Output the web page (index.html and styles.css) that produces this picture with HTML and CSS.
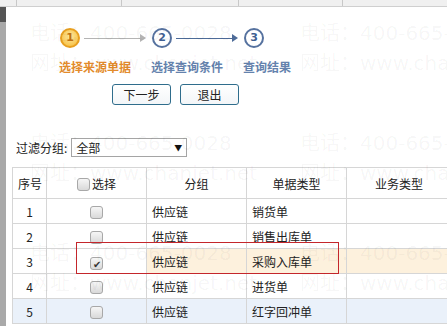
FILE: index.html
```html
<!DOCTYPE html>
<html>

<head>
    <meta charset="UTF-8">
    <title>查询</title>
    <link rel="stylesheet" href="styles.css">
</head>

<body>
    <div class="topbar">
        <div class="tab tab-a"></div>
        <div class="tab tab-b"></div>
        <div class="tab tab-c"></div>
        <div class="tab tab-d"></div>
    </div>
    <div class="page">
        <div class="side"></div>
        <div class="main">
            <!-- 步骤 -->
            <div class="steps">
                <div class="step">
                    <div class="step-top">
                        <span class="circle circle-on">1</span>
                        <span class="arrow arrow-gray"></span>
                    </div>
                    <div class="step-name name-on">选择来源单据</div>
                </div>
                <div class="step">
                    <div class="step-top">
                        <span class="circle">2</span>
                        <span class="arrow"></span>
                    </div>
                    <div class="step-name">选择查询条件</div>
                </div>
                <div class="step">
                    <div class="step-top">
                        <span class="circle">3</span>
                    </div>
                    <div class="step-name">查询结果</div>
                </div>
            </div>

            <div class="btns">
                <button type="button" class="btn">下一步</button>
                <button type="button" class="btn">退出</button>
            </div>

            <div class="filter">
                <label>过滤分组:</label>
                <div class="select">
                    <span>全部</span>
                    <span class="caret">▼</span>
                </div>
            </div>

            <table class="grid">
                <thead>
                    <tr>
                        <th class="col-no">序号</th>
                        <th class="col-chk"><span class="chk"></span>选择</th>
                        <th class="col-group">分组</th>
                        <th class="col-type">单据类型</th>
                        <th class="col-biz">业务类型</th>
                    </tr>
                </thead>
                <tbody>
                    <tr>
                        <td class="num">1</td>
                        <td class="center"><span class="chk"></span></td>
                        <td>供应链</td>
                        <td>销货单</td>
                        <td></td>
                    </tr>
                    <tr>
                        <td class="num">2</td>
                        <td class="center"><span class="chk"></span></td>
                        <td>供应链</td>
                        <td>销售出库单</td>
                        <td></td>
                    </tr>
                    <tr class="row-sel">
                        <td class="num">3</td>
                        <td class="center"><span class="chk checked">✔</span></td>
                        <td class="hl">供应链</td>
                        <td class="hl">采购入库单</td>
                        <td class="hl"></td>
                    </tr>
                    <tr>
                        <td class="num">4</td>
                        <td class="center"><span class="chk"></span></td>
                        <td>供应链</td>
                        <td>进货单</td>
                        <td></td>
                    </tr>
                    <tr class="row-hover">
                        <td class="num">5</td>
                        <td class="center"><span class="chk"></span></td>
                        <td>供应链</td>
                        <td>红字回冲单</td>
                        <td></td>
                    </tr>
                </tbody>
            </table>
        </div>
    </div>

    <div class="mark-box"></div>

    <div class="watermark">
        <div class="wm">电话：400-665-0028<br>网址：www.chanjet.net</div>
        <div class="wm">电话：400-665-<br>网址：www.chan</div>
        <div class="wm">电话：400-665-0028<br>网址：www.chanjet.net</div>
        <div class="wm">电话：400-665-<br>网址：www.chan</div>
        <div class="wm">电话：400-665-0028<br>网址：www.chanjet.net</div>
        <div class="wm">电话：400-665-<br>网址：www.chan</div>
    </div>
</body>

</html>
```

FILE: styles.css
```css
body {
    margin: 0;
    width: 447px;
    height: 326px;
    overflow: hidden;
    position: relative;
    background: #fff;
    font-family: "Noto Sans CJK SC", "Noto Sans", sans-serif;
    font-size: 12px;
    color: #222;
}

.topbar {
    height: 6px;
    background: #f0f0f0;
    border-bottom: 1px solid #cfcfcf;
    display: flex;
}

.tab {
    height: 6px;
    border-right: 1px solid #c8c8c8;
}

.tab-a {
    width: 16px;
}

.tab-b {
    width: 104px;
}

.tab-c {
    width: 116px;
}

.tab-d {
    width: 103px;
}

.page {
    display: flex;
    height: 319px;
    overflow: hidden;
}

.side {
    flex: none;
    width: 6px;
    background: linear-gradient(#555 0, #555 15px, #a9a9a9 15px);
}

.main {
    flex: 1;
    min-width: 0;
    padding-left: 6px;
}

/* 步骤 */
.steps {
    display: flex;
    margin: 21px 0 0 47px;
}

.step {
    width: 92px;
}

.step-top {
    display: flex;
    align-items: center;
    height: 20px;
    padding-left: 1px;
}

.circle {
    width: 16px;
    height: 16px;
    border: 2px solid #56729f;
    border-radius: 50%;
    background: #fff;
    color: #3f5f92;
    font-family: "DejaVu Sans", sans-serif;
    font-weight: bold;
    font-size: 11px;
    line-height: 16px;
    text-align: center;
}

.circle-on {
    border-color: #e8a020;
    background: radial-gradient(circle at 50% 40%, #fde9a0, #f6b934);
    color: #c07010;
}

.arrow {
    position: relative;
    width: 58px;
    height: 1px;
    margin-left: 4px;
    background: #4d6b98;
}

.arrow::after {
    content: "";
    position: absolute;
    right: -4px;
    top: -4px;
    border-left: 6px solid #4d6b98;
    border-top: 4.5px solid transparent;
    border-bottom: 4.5px solid transparent;
}

.arrow-gray {
    background: #b4b4b4;
}

.arrow-gray::after {
    border-left-color: #b4b4b4;
}

.step-name {
    margin-top: 11px;
    font-weight: bold;
    color: #6482ad;
    line-height: 15px;
}

.name-on {
    color: #e38b2c;
}

.btns {
    display: flex;
    gap: 9px;
    margin: 10px 0 0 100px;
}

.btn {
    width: 59px;
    height: 21px;
    padding: 0;
    border: 1px solid #2f6d8c;
    border-radius: 3px;
    background: linear-gradient(#fff, #f3f6f8);
    font-family: "Noto Sans CJK SC", sans-serif;
    font-size: 12px;
    color: #222;
}

.filter {
    display: flex;
    align-items: center;
    margin: 33px 0 0 4px;
}

.select {
    display: flex;
    justify-content: space-between;
    align-items: center;
    width: 106px;
    height: 17px;
    margin-left: 4px;
    padding: 0 4px;
    border: 1px solid #a5a5a5;
    background: #fff;
    line-height: 17px;
}

.caret {
    font-size: 8px;
    color: #111;
}

/* 表格 */
.grid {
    margin-top: 10px;
    border-collapse: collapse;
    table-layout: fixed;
    width: 440px;
}

.grid th,
.grid td {
    border: 1px solid #d6d6d6;
    padding: 0 5px;
    font-weight: normal;
    white-space: nowrap;
}

.grid th {
    height: 30px;
    text-align: center;
}

.grid td {
    height: 24px;
}

.col-no {
    width: 23px;
}

.col-chk,
.col-group,
.col-type {
    width: 89px;
}

.grid .num,
.grid .center {
    text-align: center;
}

.chk {
    display: inline-block;
    box-sizing: border-box;
    width: 13px;
    height: 13px;
    border: 1px solid #a8a8a8;
    border-radius: 3px;
    background: linear-gradient(#f6f6f6, #d9d9d9);
    vertical-align: -2px;
    font-size: 10px;
    line-height: 11px;
    text-align: center;
    color: #333;
}

th .chk {
    margin-right: 2px;
}

.row-sel .hl {
    background: #fdf1dd;
}

.row-hover td {
    background: #eaf1fa;
}

.mark-box {
    position: absolute;
    left: 76px;
    top: 242px;
    width: 261px;
    height: 30px;
    border: 1px solid #c4262b;
    pointer-events: none;
}

.watermark {
    position: absolute;
    left: 30px;
    top: 18px;
    display: grid;
    grid-template-columns: 270px 147px;
    row-gap: 50px;
    overflow: hidden;
    pointer-events: none;
}

.wm {
    font-family: "DejaVu Sans", "Noto Sans CJK SC", sans-serif;
    font-size: 20px;
    line-height: 30px;
    white-space: nowrap;
    overflow: hidden;
    color: rgba(0, 0, 0, 0.045);
}
```
